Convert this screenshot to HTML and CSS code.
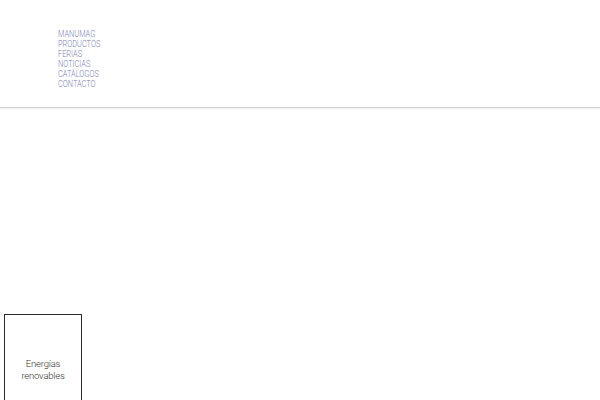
FILE: index.html
```html
<!DOCTYPE html>
<html lang="es">
<head>
<meta charset="utf-8">
<link rel="stylesheet" href="styles.css">
</head>
<body>
<header class="site-header">
  <nav class="main-nav">
    <a href="#">MANUMAG</a>
    <a href="#">PRODUCTOS</a>
    <a href="#">FERIAS</a>
    <a href="#">NOTICIAS</a>
    <a href="#">CATÁLOGOS</a>
    <a href="#">CONTACTO</a>
  </nav>
</header>
<main class="content">
  <div class="tile">
    <span class="tile-label">Energías<br>renovables</span>
  </div>
</main>
</body>
</html>
```
FILE: styles.css
```css
html, body {
  margin: 0;
  padding: 0;
  background: #fff;
}
body {
  font-family: Roboto, "Liberation Sans", sans-serif;
  overflow: hidden;
  height: 400px;
}
.site-header {
  height: 108px;
  border-bottom: 1px solid #d0d0d0;
  box-shadow: 0 1px 2px rgba(0,0,0,0.07);
  box-sizing: border-box;
  padding: 29px 0 0 58px;
}
.main-nav {
  display: flex;
  flex-direction: column;
  align-items: flex-start;
  transform: scaleX(0.82);
  transform-origin: left top;
}
.main-nav a {
  font-size: 9px;
  line-height: 10px;
  font-weight: 300;
  color: #7c82b2;
  text-decoration: none;
}
.content {
  padding: 206px 0 0 4px;
}
.tile {
  width: 76px;
  height: 110px;
  border: 1px solid #2a2a2a;
  display: flex;
  align-items: center;
  justify-content: center;
  text-align: center;
}
.tile-label {
  font-size: 9.5px;
  line-height: 12px;
  letter-spacing: -0.2px;
  color: #333;
  font-weight: 300;
}
```
